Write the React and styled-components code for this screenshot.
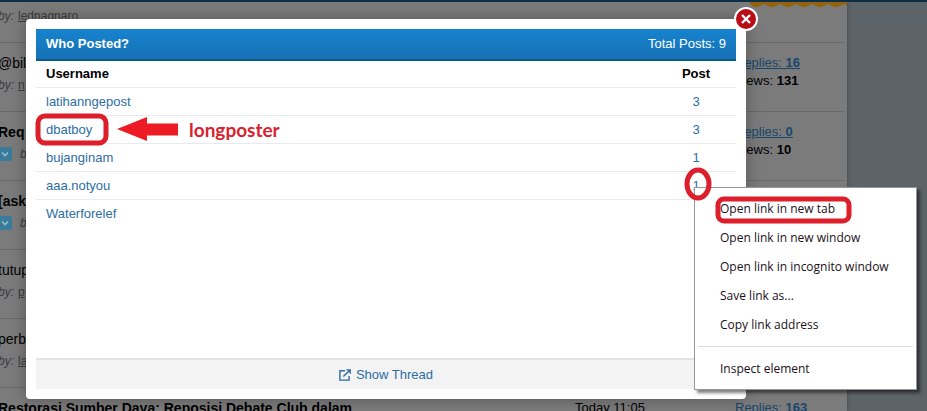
import React from 'react';
import styled, { createGlobalStyle } from 'styled-components';

const GlobalStyle = createGlobalStyle`
	* {
		box-sizing: border-box;
	}
	body {
		margin: 0;
		font-family: "Liberation Sans", Arial, sans-serif;
		font-size: 13px;
		line-height: 18px;
		color: #000;
	}
	a {
		color: #2c6da4;
		text-decoration: none;
	}
`;

const Page = styled.div`
	position: relative;
	display: flex;
	height: 100vh;
	overflow: hidden;
	background: #5c6369;
	border-top: 2px solid #0d2f45;
`;

const ThreadList = styled.main`
	position: relative;
	flex: 1;
	min-width: 0;
	padding-right: 2px;
	background: #7b7b7b;
	box-shadow: 0 0 4px rgba(0, 0, 0, 0.3);
`;

const Gutter = styled.div`
	flex: 0 0 80px;
`;

const Ribbon = styled.svg`
	position: absolute;
	top: -2px;
	right: 0;
`;

const Thread = styled.article`
	display: grid;
	grid-template-columns: 1fr 160px 110px;
	height: 69px;
	padding: 9px 0;
	border-bottom: 1px solid #696969;
	&:first-of-type {
		height: 41px;
		padding: 3px 0;
	}
`;

const Subject = styled.div`
	margin-left: -2px;
`;

const ThreadTitle = styled.h2`
	margin: 0;
	font-size: 14px;
	line-height: 22px;
	font-weight: ${props => (props.$bold ? 'bold' : 'normal')};
	white-space: nowrap;
`;

const Byline = styled.p`
	display: flex;
	align-items: center;
	gap: 4px;
	margin: 0;
	font-size: 12px;
	line-height: 22px;
	font-style: italic;
	color: #3c3c3c;
	a {
		color: #3c3c3c;
		font-style: normal;
		text-decoration: underline;
	}
`;

const JumpLink = styled.a`
	display: flex;
	width: 14px;
	height: 14px;
	margin-right: 4px;
	align-items: center;
	justify-content: center;
	border-radius: 2px;
	background: #397b9b;
`;

const Stats = styled.div`
	padding-top: 2px;
	a {
		display: block;
		width: fit-content;
		color: #18466c;
		text-decoration: underline;
	}
`;

const Modal = styled.section`
	position: absolute;
	top: 17px;
	bottom: 12px;
	left: 26px;
	right: 181px;
	display: flex;
	flex-direction: column;
	padding: 10px;
	border-radius: 4px;
	background: #fff;
	box-shadow: 0 0 16px rgba(0, 0, 0, 0.3);
`;

const ModalHeader = styled.header`
	display: flex;
	align-items: center;
	justify-content: space-between;
	height: 32px;
	padding: 0 10px;
	color: #fff;
	background: linear-gradient(#1783cf, #1672b5);
	border-bottom: 2px solid #0f5688;
	h1 {
		margin: 0;
		font-size: 13px;
	}
`;

const CloseButton = styled.button`
	position: absolute;
	top: -12px;
	right: -12px;
	width: 24px;
	height: 24px;
	padding: 0;
	border: 0;
	background: none;
	svg {
		display: block;
	}
`;

const PostersTable = styled.table`
	width: 100%;
	border-collapse: collapse;
	th,
	td {
		height: 28px;
		padding: 2px 10px 0;
		text-align: left;
		border-bottom: 1px solid #e6ebee;
	}
	th {
		height: 26px;
		padding-top: 0;
	}
	th:last-child,
	td:last-child {
		width: 80px;
		text-align: center;
	}
	tr:last-child td {
		border-bottom: 0;
	}
`;

const ModalFooter = styled.footer`
	display: flex;
	justify-content: center;
	margin-top: auto;
	height: 31px;
	border-top: 2px solid #e2e2e2;
	background: #f3f3f3;
	a {
		display: flex;
		align-items: center;
		gap: 5px;
	}
`;

const ContextMenu = styled.menu`
	position: absolute;
	top: 185px;
	right: 10px;
	width: 223px;
	margin: 0;
	padding: 6px 3px;
	list-style: none;
	border: 1px solid #979797;
	background: #fff;
	box-shadow: 3px 3px 3px rgba(0, 0, 0, 0.5);
`;

const MenuItem = styled.button`
	display: block;
	width: 100%;
	height: 29px;
	padding: 0 22px;
	border: 0;
	background: none;
	color: #1b1020;
	font-family: "Open Sans", sans-serif;
	font-size: 12px;
	text-align: left;
`;

const MenuDivider = styled.li`
	height: 1px;
	margin: 7px 0;
	background: #dcdcdc;
`;

const Marks = styled.svg`
	position: absolute;
	top: -2px;
	left: 0;
	pointer-events: none;
`;

const Callout = styled.div`
	position: absolute;
	top: 112px;
	left: 116px;
	display: flex;
	align-items: center;
	gap: 11px;
	color: #d7232f;
	font-family: Lato, sans-serif;
	font-size: 19px;
	font-weight: bold;
	line-height: 24px;
	span {
		padding-top: 4px;
	}
`;

const threads = [
	{ author: 'lednagnaro' },
	{ title: '@bil', author: 'n', replies: 16, views: 131 },
	{ title: 'Req', author: '', replies: 0, views: 10, bold: true, unread: true },
	{ title: '[ask', author: '', bold: true, unread: true },
	{ title: 'tutup', author: 'p' },
	{ title: 'perb', author: 'la' },
	{
		title: 'Restorasi Sumber Daya: Reposisi Debate Club dalam',
		date: 'Today 11:05',
		replies: 163,
		bold: true
	}
];

const posters = [
	{ name: 'latihanngepost', posts: 3 },
	{ name: 'dbatboy', posts: 3 },
	{ name: 'bujanginam', posts: 1 },
	{ name: 'aaa.notyou', posts: 1 },
	{ name: 'Waterforelef' }
];

const linkActions = [
	'Open link in new tab',
	'Open link in new window',
	'Open link in incognito window',
	'Save link as...',
	'Copy link address'
];

const ThreadRow = ({ thread }) => (
	<Thread>
		<Subject>
			{thread.title && <ThreadTitle $bold={thread.bold}>{thread.title}</ThreadTitle>}
			{thread.author !== undefined && (
				<Byline>
					{thread.unread && (
						<JumpLink href="#" aria-label="Go to first unread post">
							<svg width="8" height="6" viewBox="0 0 8 6">
								<path d="M1 1.5 4 4.5 7 1.5" fill="none" stroke="#9cb9c7" strokeWidth="1.6" />
							</svg>
						</JumpLink>
					)}
					by: {thread.author && <a href="#">{thread.author}</a>}
				</Byline>
			)}
		</Subject>
		<Stats>{thread.date}</Stats>
		{thread.replies !== undefined && (
			<Stats>
				<a href="#">Replies: <b>{thread.replies}</b></a>
				{thread.views && <>Views: <b>{thread.views}</b></>}
			</Stats>
		)}
	</Thread>
);

const App = () => {
	return (
		<>
			<GlobalStyle />
			<Page>
				<ThreadList>
					<Ribbon width="97" height="9" viewBox="0 0 97 9">
						<path
							d="M0 0H97V6L94 4 88 7 84 7 78 4 72 7 68 7 62 4 56 7 52 7 46 4 40 7 36 7 30 4 24 7 20 7 14 4 8 7 4 7 0 4Z"
							fill="#93620f"
						/>
					</Ribbon>
					{threads.map((thread, i) => (
						<ThreadRow key={i} thread={thread} />
					))}
				</ThreadList>
				<Gutter />

				<Modal role="dialog" aria-labelledby="who-posted">
					<CloseButton aria-label="Close">
						<svg width="24" height="24" viewBox="0 0 24 24">
							<circle cx="12" cy="12" r="12" fill="#fff" />
							<circle cx="12" cy="12" r="10" fill="#b80d14" />
							<path d="M8 8 16 16M16 8 8 16" stroke="#fff" strokeWidth="2.4" />
						</svg>
					</CloseButton>
					<ModalHeader>
						<h1 id="who-posted">Who Posted?</h1>
						<span>Total Posts: 9</span>
					</ModalHeader>
					<PostersTable>
						<thead>
							<tr>
								<th>Username</th>
								<th>Post</th>
							</tr>
						</thead>
						<tbody>
							{posters.map(poster => (
								<tr key={poster.name}>
									<td><a href="#">{poster.name}</a></td>
									<td>{poster.posts && <a href="#">{poster.posts}</a>}</td>
								</tr>
							))}
						</tbody>
					</PostersTable>
					<ModalFooter>
						<a href="#">
							<svg width="12" height="12" viewBox="0 0 12 12" fill="none" stroke="currentColor" strokeWidth="1.4">
								<path d="M6 1.7H.9V11.1H10.1V7" />
								<path d="M4.4 7.6 10.8 1.2M7.4.9H11.2V4.7" />
							</svg>
							Show Thread
						</a>
					</ModalFooter>
				</Modal>

				<ContextMenu>
					{linkActions.map(action => (
						<li key={action}><MenuItem>{action}</MenuItem></li>
					))}
					<MenuDivider role="separator" />
					<li><MenuItem>Inspect element</MenuItem></li>
				</ContextMenu>

				<Callout>
					<svg width="62" height="26" viewBox="0 0 62 26">
						<path d="M1 14 31 2V8.500H62V20.500H31V26Z" fill="#ed1c24" />
					</svg>
					<span>longposter</span>
				</Callout>
				<Marks width="927" height="411" viewBox="0 0 927 411" fill="none" stroke="#dc1f2b" strokeWidth="5">
					<rect x="38" y="116" width="68" height="27" rx="7" />
					<ellipse cx="698" cy="184" rx="11" ry="14" />
					<rect x="718" y="199" width="131" height="22" rx="6" />
				</Marks>
			</Page>
		</>
	);
};

export default App;
